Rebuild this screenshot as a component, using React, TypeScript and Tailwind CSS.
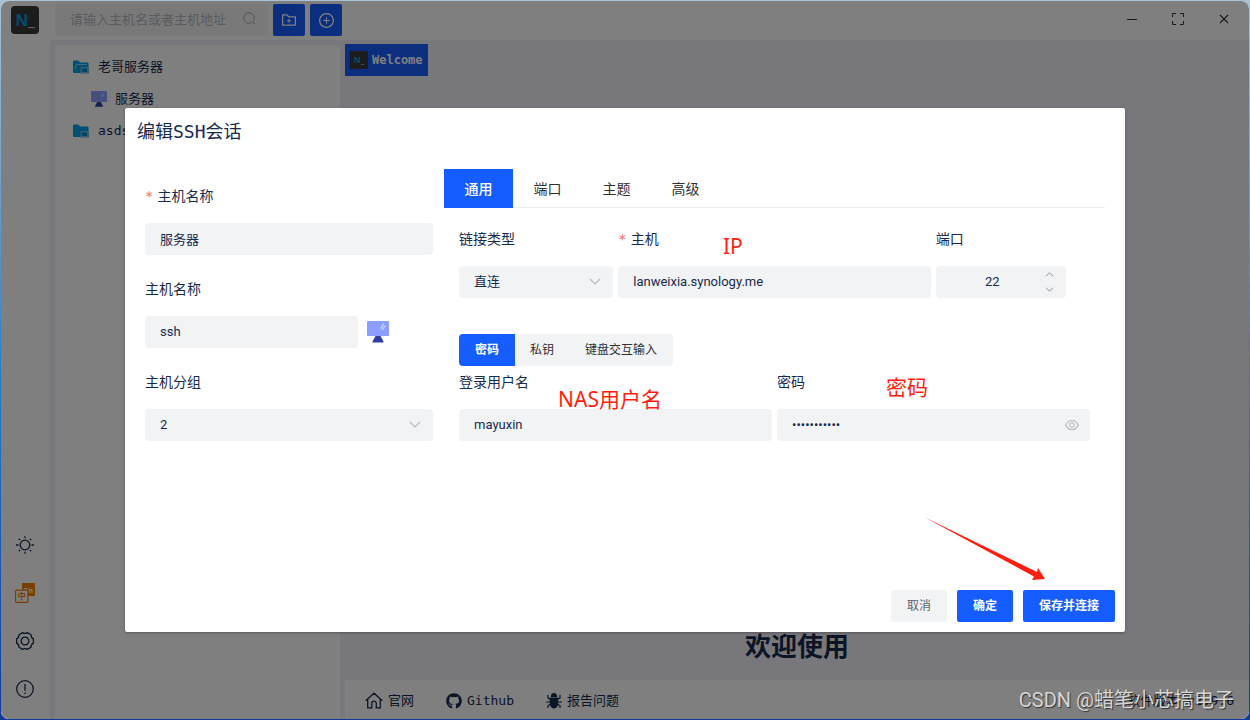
import { useState } from "react";
import type { ReactNode } from "react";
import { clsx } from "clsx";
import { AiOutlineEye, AiOutlineFolderAdd, AiOutlinePlusCircle } from "react-icons/ai";
import { FaGithub } from "react-icons/fa";

const fieldClass =
  "h-8 w-full rounded bg-[#f2f3f5] px-[15px] font-['Roboto','Noto_Sans_CJK_SC',sans-serif] text-[13px] text-[#172b4d] outline-none";
const inputClass = `${fieldClass} pb-0.5`;

function Logo({ small = false }: { small?: boolean }) {
  return (
    <span
      className={clsx(
        "flex shrink-0 items-center justify-center bg-[#383838] font-['Open_Sans',sans-serif] font-bold text-[#0098d8]",
        small ? "size-[18px] text-[9px]" : "size-7 rounded text-base",
      )}
    >
      N<span className="text-[#b8b8b8]">_</span>
    </span>
  );
}

function MonitorIcon({ className }: { className: string }) {
  return (
    <svg viewBox="0 0 22 22" className={className} aria-hidden="true">
      <rect x="0" y="0" width="22" height="15" rx="1" fill="#8c9eff" />
      <path d="M8.500 15h5l3 5.500q.3 1-.6 1H6.100q-.9 0-.6-1z" fill="#303f9f" />
      <path d="M13.500 7.500 17 2.500M15 9l3.500-4.500" stroke="#d5dbff" strokeWidth="1.200" fill="none" />
    </svg>
  );
}

function FolderIcon({ open = false }: { open?: boolean }) {
  return (
    <svg viewBox="0 0 16 14" className="h-3.5 w-4 shrink-0" aria-hidden="true">
      <path d="M0 1.500Q0 .5 1 .5h4.500L7 2.500h7.500q1 0 1 1V13H1q-1 0-1-1z" fill="#00a0e9" />
      {open && <path d="M1.500 10.500 3.500 5H14v-.8H3L1.500 8z" fill="#b9e2f5" />}
      <rect x="7.500" y="7" width="8.500" height="6.500" fill="#6fb9dc" />
      <rect x="9" y="8.500" width="5" height="3.500" fill="#0086c4" />
    </svg>
  );
}

function Chevron({ className, up = false }: { className: string; up?: boolean }) {
  return (
    <svg viewBox="0 0 12 7" className={className} fill="none" stroke="currentColor" strokeWidth="1.200" aria-hidden="true">
      <path d={up ? "M1 6 6 1l5 5" : "M1 1l5 5 5-5"} />
    </svg>
  );
}

function SunIcon() {
  return (
    <svg viewBox="0 0 20 20" className="size-5" fill="none" stroke="currentColor" strokeWidth="1.300" aria-hidden="true">
      <circle cx="10" cy="10" r="4.800" />
      <path d="M10 1.200v2M10 16.800v2M1 10h2.500M16.500 10H19M3.800 3.800l1.300 1.300M14.900 14.900l1.300 1.300M16.200 3.800l-1.300 1.300M5.100 14.900l-1.300 1.300" />
    </svg>
  );
}

function GearIcon() {
  return (
    <svg viewBox="-10 -10 20 20" className="size-5" fill="none" stroke="currentColor" strokeWidth="1.300" strokeLinejoin="round" aria-hidden="true">
      <path d="M8.400-2.100V2.100Q5.900 3.400 6 6.300L2.400 8.400Q0 6.800-2.400 8.400L-6 6.300Q-5.900 3.400-8.400 2.100V-2.100Q-5.900-3.400-6-6.300L-2.400-8.400Q0-6.800 2.400-8.400L6-6.300Q5.900-3.400 8.400-2.100z" />
      <circle r="3.900" />
    </svg>
  );
}

function InfoIcon() {
  return (
    <svg viewBox="0 0 20 20" className="size-5" fill="none" stroke="currentColor" strokeWidth="1.300" aria-hidden="true">
      <circle cx="10" cy="10" r="8.300" />
      <path d="M10 5v6.800M10 13.400v1.500" />
    </svg>
  );
}

function LanguageIcon() {
  return (
    <svg viewBox="0 0 20 20" className="size-5" aria-hidden="true">
      <rect x="7" y="0" width="13" height="13" rx="1" fill="#f57c00" />
      <text x="9" y="9.500" fontSize="8" fontWeight="bold" fontFamily="Roboto, sans-serif" fill="#fff">
        En
      </text>
      <rect x=".6" y="7.100" width="12.300" height="12.300" rx="1" fill="#fff" stroke="#f57c00" strokeWidth="1.200" />
      <text x="2.700" y="16.200" fontSize="8" fontWeight="bold" fontFamily="'Noto Sans CJK SC', sans-serif" fill="#f57c00">
        中
      </text>
    </svg>
  );
}

function HomeIcon() {
  return (
    <svg viewBox="0 0 18 17" className="h-[17px] w-[18px]" fill="none" stroke="currentColor" strokeWidth="1.300" aria-hidden="true">
      <path d="M.7 8.800 9 1.200l8.300 7.600M2.700 7.500v8.300h4v-4.300a2.300 2.300 0 0 1 4.600 0v4.300h4V7.500" />
    </svg>
  );
}

function BugIcon() {
  return (
    <svg viewBox="0 0 16 16" className="size-4" fill="none" stroke="currentColor" strokeWidth="1.200" aria-hidden="true">
      <path d="M5.500 3.500a2.500 2.800 0 0 1 5 0z" fill="currentColor" />
      <path d="M4.300 5h3.200v9.800C5.400 14.300 4.300 12.500 4.300 10zM11.700 5H8.500v9.800c2.100-.5 3.200-2.300 3.200-4.800z" fill="currentColor" />
      <path d="M2 2v3l2.500 1.200M14 2v3l-2.500 1.200M0 9h4M12 9h4M2 15v-2.500l2.500-1.300M14 15v-2.500l-2.500-1.300" />
    </svg>
  );
}

type FieldProps = { id: string; label: string; required?: boolean; children: ReactNode };

function Field({ id, label, required, children }: FieldProps) {
  return (
    <div>
      <label htmlFor={id} className="mb-4 block h-[22px] text-sm leading-[22px]">
        {required && <span className="mr-1 text-[#f56c6c]">*</span>}
        {label}
      </label>
      {children}
    </div>
  );
}

function SelectField({ id, value }: { id: string; value: string }) {
  return (
    <div className="relative">
      <select id={id} className={clsx(fieldClass, "appearance-none")} defaultValue={value}>
        <option>{value}</option>
      </select>
      <Chevron className="pointer-events-none absolute top-3 right-3 h-[7px] w-3 text-[#b8bcc4]" />
    </div>
  );
}

function TopBar() {
  return (
    <header className="flex h-[39px] shrink-0 items-center bg-white pb-px pl-2.5">
      <Logo />
      <div className="relative ml-4 w-[213px]">
        <input
          aria-label="搜索主机"
          placeholder="请输入主机名或者主机地址"
          className={clsx(inputClass, "placeholder:text-[#b4b8c0]")}
        />
        <svg viewBox="0 0 13 13" className="absolute top-2 right-3 size-[13px] text-[#a8abb2]" fill="none" stroke="currentColor" aria-hidden="true">
          <circle cx="6" cy="6" r="5.300" />
          <path d="m10 10 2 2" />
        </svg>
      </div>
      <button aria-label="新建分组" className="ml-[5px] flex size-8 items-center justify-center rounded-xs bg-[#165dff] text-white">
        <AiOutlineFolderAdd size={18} />
      </button>
      <button aria-label="新建会话" className="ml-[5px] flex size-8 items-center justify-center rounded-xs bg-[#165dff] text-white">
        <AiOutlinePlusCircle size={17} />
      </button>
      <div className="ml-auto flex self-start pr-0.5 text-[#333]">
        <button aria-label="最小化" className="flex h-9 w-[46px] items-center justify-center">
          <svg viewBox="0 0 12 12" className="size-3" stroke="currentColor">
            <path d="M1 6.500h10" />
          </svg>
        </button>
        <button aria-label="最大化" className="flex h-9 w-[46px] items-center justify-center">
          <svg viewBox="0 0 12 12" className="size-3" fill="none" stroke="currentColor">
            <path d="M.5 4V.5H4M8 .5h3.500V4M11.500 8v3.500H8M4 11.500H.5V8" />
          </svg>
        </button>
        <button aria-label="关闭" className="flex h-9 w-[46px] items-center justify-center">
          <svg viewBox="0 0 12 12" className="size-3" stroke="currentColor" strokeWidth="1.100">
            <path d="m2 2 8 8M10 2l-8 8" />
          </svg>
        </button>
      </div>
    </header>
  );
}

function SideBar() {
  return (
    <nav className="flex w-[49px] shrink-0 flex-col items-center justify-end gap-7 bg-white pr-px pb-5">
      <button aria-label="主题"><SunIcon /></button>
      <button aria-label="语言"><LanguageIcon /></button>
      <button aria-label="设置"><GearIcon /></button>
      <button aria-label="关于"><InfoIcon /></button>
    </nav>
  );
}

function HostTree() {
  return (
    <aside className="w-[285px] shrink-0 bg-white pt-1.5 text-[13px]">
      <div className="flex h-8 items-center gap-[9px] pl-[18px]"><FolderIcon open />老哥服务器</div>
      <div className="flex h-8 items-center gap-2 pl-9"><MonitorIcon className="size-4" />服务器</div>
      <div className="flex h-8 items-center gap-[9px] pl-[18px]"><FolderIcon />asds</div>
    </aside>
  );
}

function Workspace() {
  return (
    <main className="flex min-w-0 flex-1 flex-col">
      <button className="-mt-px flex h-8 items-center gap-1 self-start bg-[#165dff] px-[5px] text-xs font-bold text-white">
        <Logo small />
        Welcome
      </button>
      <div className="flex flex-1 items-end justify-center pb-[15px]">
        <h1 className="text-[26px] leading-9 font-bold">欢迎使用</h1>
      </div>
      <footer className="flex h-[39px] items-center gap-8 bg-white pt-0.5 pr-[15px] pl-5 text-[13px]">
        <a href="#site" className="flex items-center gap-[5px]"><HomeIcon />官网</a>
        <a href="#github" className="flex items-center gap-[5px]"><FaGithub size={16} />Github</a>
        <a href="#issues" className="flex items-center gap-[5px]"><BugIcon />报告问题</a>
        <span className="ml-auto">软件版本 v2.9.6</span>
      </footer>
    </main>
  );
}

const tabs = ["通用", "端口", "主题", "高级"];
const authModes = ["密码", "私钥", "键盘交互输入"];

function SessionDialog() {
  const [tab, setTab] = useState("通用");
  const [auth, setAuth] = useState("密码");

  return (
    <div
      role="dialog"
      aria-labelledby="dialog-title"
      className="relative mt-[15vh] flex w-4/5 flex-col rounded-xs bg-white shadow-[0_1px_3px_rgba(0,0,0,0.3)]"
    >
      <h2 id="dialog-title" className="h-12 px-3 text-lg leading-[48px]">编辑SSH会话</h2>

      <div className="flex min-h-[434px] gap-[11px] px-5 pt-[13px]">
        <div className="flex w-[30%] shrink-0 flex-col gap-[23px] pt-4">
          <Field id="name" label="主机名称" required>
            <input id="name" defaultValue="服务器" className={inputClass} />
          </Field>
          <Field id="icon" label="主机名称">
            <div className="flex items-center gap-[9px]">
              <input id="icon" defaultValue="ssh" className={clsx(inputClass, "max-w-[213px]")} />
              <MonitorIcon className="size-[22px] shrink-0" />
            </div>
          </Field>
          <Field id="group" label="主机分组">
            <SelectField id="group" value="2" />
          </Field>
        </div>

        <div className="min-w-0 flex-1">
          <div role="tablist" className="flex border-b border-[#ebedf2]">
            {tabs.map((t) => (
              <button
                key={t}
                role="tab"
                aria-selected={t === tab}
                onClick={() => setTab(t)}
                className={clsx(
                  "-mb-px h-[39px] w-[69px] text-sm",
                  t === tab ? "bg-[#165dff] font-medium text-white" : "text-[#303133]",
                )}
              >
                {t}
              </button>
            ))}
          </div>

          <div className="px-[15px] pt-5">
            <div className="grid grid-cols-[154fr_312fr_154fr] gap-[5px]">
              <Field id="link" label="链接类型">
                <SelectField id="link" value="直连" />
              </Field>
              <Field id="host" label="主机" required>
                <input id="host" defaultValue="lanweixia.synology.me" className={inputClass} />
              </Field>
              <Field id="port" label="端口">
                <div className="relative w-[130px]">
                  <input
                    id="port"
                    type="number"
                    defaultValue={22}
                    className={clsx(
                      inputClass,
                      "pr-8 text-center [appearance:textfield] [&::-webkit-inner-spin-button]:appearance-none",
                    )}
                  />
                  <div className="absolute inset-y-0 right-3 flex flex-col justify-center gap-2.5 text-[#7a8496]">
                    <button aria-label="增加"><Chevron up className="h-[5px] w-[9px]" /></button>
                    <button aria-label="减少"><Chevron className="h-[5px] w-[9px]" /></button>
                  </div>
                </div>
              </Field>
            </div>

            <fieldset className="mt-9 mb-[5px] flex w-fit overflow-hidden rounded bg-[#f2f3f5]">
              {authModes.map((mode) => (
                <label
                  key={mode}
                  className={clsx(
                    "relative -ml-px flex h-8 cursor-pointer items-center px-4 text-xs first:ml-0",
                    mode === auth ? "z-10 bg-[#165dff] font-bold text-white" : "text-[#303133]",
                  )}
                >
                  <input
                    type="radio"
                    name="auth"
                    className="sr-only"
                    checked={mode === auth}
                    onChange={() => setAuth(mode)}
                  />
                  {mode}
                </label>
              ))}
            </fieldset>

            <div className="grid grid-cols-2 gap-[5px]">
              <Field id="user" label="登录用户名">
                <input id="user" defaultValue="mayuxin" className={inputClass} />
              </Field>
              <Field id="password" label="密码">
                <div className="relative">
                  <input id="password" type="password" defaultValue="12345678901" className={inputClass} />
                  <button aria-label="显示密码" className="absolute top-2 right-2.5 text-[#b4b8c0]">
                    <AiOutlineEye size={16} />
                  </button>
                </div>
              </Field>
            </div>
          </div>
        </div>
      </div>

      <div className="flex justify-end gap-2.5 px-2.5 pb-2.5 text-xs">
        <button className="h-8 rounded-xs bg-[#f2f3f5] px-4 text-[#606266]">取消</button>
        <button className="h-8 rounded-xs bg-[#165dff] px-4 font-bold text-white">确定</button>
        <button className="h-8 rounded-xs bg-[#165dff] px-4 font-bold text-white">保存并连接</button>
      </div>

      {/* Red tutorial marks */}
      <div className="pointer-events-none absolute inset-0 font-['Noto_Sans','Noto_Sans_CJK_SC',sans-serif] text-[21px] leading-6 text-[#ff1e10]">
        <span className="absolute top-[126px] left-[598px]">IP</span>
        <span className="absolute top-[279px] left-[433px]">NAS用户名</span>
        <span className="absolute top-[267px] left-[761px]">密码</span>
        <svg viewBox="0 0 122 64" className="absolute top-[409px] left-[799px] h-16 w-[122px]" aria-hidden="true">
          <path d="M0 0 113 55l1-4 7 11-13 1 2-3.500z" fill="#ff1e10" />
        </svg>
      </div>
    </div>
  );
}

export default function App() {
  return (
    <div className="relative h-screen bg-linear-to-b from-[#a9c3d6] via-[#2f7fc0] to-[#123a9c] p-px font-['DejaVu_Sans_Mono','Noto_Sans_CJK_SC',monospace] text-[#172b4d]">
      <div className="relative flex h-full flex-col overflow-hidden rounded-lg bg-[#f0eef8]">
        <TopBar />
        <div className="flex min-h-0 flex-1">
          <SideBar />
          <div className="flex min-w-0 flex-1 gap-[5px] pt-[5px] pl-[5px]">
            <HostTree />
            <Workspace />
          </div>
        </div>
        <div className="absolute inset-0 z-20 bg-black/50" />
      </div>
      <div className="absolute inset-0 z-20 flex items-start justify-center">
        <SessionDialog />
      </div>
      <p className="pointer-events-none absolute right-4 bottom-[5px] z-30 font-['Roboto','Noto_Sans_CJK_SC',sans-serif] text-xl leading-[30px] text-[#d6d6d6] [text-shadow:1px_1px_1px_rgba(0,0,0,0.6)]">
        CSDN @蜡笔小芯搞电子
      </p>
    </div>
  );
}
